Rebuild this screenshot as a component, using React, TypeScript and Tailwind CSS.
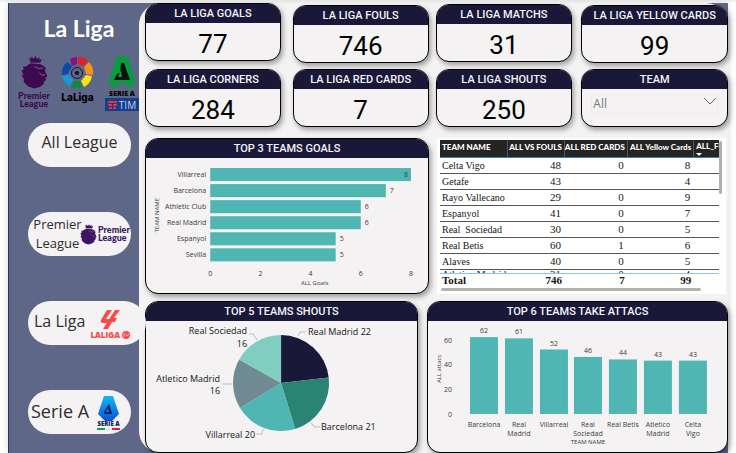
import type { ReactNode } from "react";

const SANS = "font-['Open_Sans',sans-serif]";

function Lion({ className }: { className: string }) {
  return (
    <svg viewBox="0 0 28 34" className={className} aria-hidden="true">
      <path
        fill="currentColor"
        d="M8 1l2 2 1-2.500 2 2.500 2-3 1.500 3 2.500-2v3l2.500-1.500L20 7 10 6.500zM10 7.500l10 1 4 2 2 3-1.500.5 1.500 4 1.500 3-2 1 .5 3-2 1-.5 3-4 3-6 1.500-6-2-4-4-1-3h1l-3-5h2l-2-5h2v-4l2 .5z"
      />
      <path
        d="M14 11l5 2 4-1M19 17l3 3 3-1"
        fill="none"
        className="stroke-white/35"
        strokeWidth="1"
      />
    </svg>
  );
}

function PremierLogo() {
  return (
    <div className="flex w-[32px] flex-col items-center text-[#3d0a4f]">
      <Lion className="h-[33px] w-[27px]" />
      <span className="mt-[3px] text-center font-['Lato',sans-serif] text-[9px] font-black leading-[8px]">
        Premier League
      </span>
    </div>
  );
}

const wedges = [
  { d: "M9 3A15 15 0 0 1 16 1V8L11 10z", fill: "#8a0f80" },
  { d: "M17 1A15 15 0 0 1 27 5L23 10 17 8z", fill: "#e51f25" },
  { d: "M28 6A15 15 0 0 1 32 19L25 18 23 11z", fill: "#f7901e" },
  { d: "M31 20A15 15 0 0 1 23 31L20 25 25 19z", fill: "#fbe016" },
  { d: "M22 31A15 15 0 0 1 10 31L13 25 19 25z", fill: "#128a3b" },
  { d: "M9 30A15 15 0 0 1 1 20L8 19 12 24z", fill: "#139bd8" },
  { d: "M1 19A15 15 0 0 1 6 6L11 10 7 18z", fill: "#0b4ba8" },
];

function LaLigaLogo() {
  return (
    <div className="flex w-[34px] flex-col items-center text-black">
      <svg viewBox="0 0 33 33" className="size-[33px]" aria-hidden="true">
        {wedges.map((w) => (
          <path key={w.fill} d={w.d} fill={w.fill} />
        ))}
        <circle cx="16" cy="17" r="5.5" fill="none" stroke="#111827" strokeWidth="1" />
        <path d="M16 15l2 1.500-1 2h-2l-1-2z" fill="#111827" stroke="#111827" />
      </svg>
      <span className="mt-px font-['Inter',sans-serif] text-[10px] font-extrabold leading-[14px]">LaLiga</span>
    </div>
  );
}

function SerieALogo() {
  return (
    <div className="flex w-[34px] flex-col items-center">
      <svg viewBox="0 0 28 33" className="h-[33px] w-[28px]" aria-hidden="true">
        <path d="M9 0h11l8 27-8 6H8L0 27z" fill="#0b9a42" />
        <path d="M13 7h3l6 17H6l3-6 3-1z" fill="#06150d" />
        <path d="M13 14l-3 7h4z" fill="#0b9a42" />
        <path d="M8 33l3-6h6l3 6z" fill="#5f6788" />
      </svg>
      <span className="font-['Open_Sans',sans-serif] text-[7px] font-extrabold leading-[9px] text-black">SERIE A</span>
      <span className="flex h-[13px] w-full items-center justify-center gap-[2px] bg-[#12408f] text-[#c6cfe4]">
        <svg viewBox="0 0 9 8" className="h-[8px] w-[9px]" aria-hidden="true">
          <path d="M0 0h9v2H0zM0 3h4v2H0zM5 3h4v2H5zM1 6h3v2H1zM5 6h3v2H5z" fill="#e8323c" />
        </svg>
        <span className="font-['Open_Sans',sans-serif] text-[10px] leading-[12px]">TIM</span>
      </span>
    </div>
  );
}

function PremierWide() {
  return (
    <span className="-ml-[2px] flex items-center gap-px text-[#3a1560]">
      <Lion className="h-[21px] w-[17px]" />
      <span className="w-[31px] text-left font-['Lato',sans-serif] text-[9px] font-black leading-[8px]">
        Premier League
      </span>
    </span>
  );
}

function LaLigaRed() {
  return (
    <span className="flex flex-col items-center pt-[4px] text-[#fa4b4b]">
      <svg viewBox="0 0 20 20" className="size-[20px]" aria-hidden="true">
        <path
          d="M7 0h5L6 9h4l-2 4H2Q0 12 1 10zM15 0h5l-6 8h3l-2 4h-3l-4 7H3l5-8z"
          fill="currentColor"
        />
      </svg>
      <span className="flex items-center gap-[2px]">
        <span className="font-['Open_Sans',sans-serif] text-[8px] font-extrabold leading-[10px]">LALIGA</span>
        <svg viewBox="0 0 8 8" className="size-[8px]" aria-hidden="true">
          <circle cx="4" cy="4" r="4" fill="currentColor" />
          <path d="M1 3h2M1 5h2M4 3l1 2 2-2" stroke="#f4f2f3" strokeWidth=".7" fill="none" />
        </svg>
      </span>
    </span>
  );
}

function SerieABlue() {
  return (
    <span className="flex w-[23px] flex-col items-center pt-[2px]">
      <svg viewBox="0 0 21 25" className="h-[25px] w-[21px]" aria-hidden="true">
        <defs>
          <linearGradient id="serie" x1="0" y1="0" x2="0" y2="1">
            <stop offset="0" stopColor="#12b8f5" />
            <stop offset="1" stopColor="#0b50d8" />
          </linearGradient>
        </defs>
        <path d="M6 0h9l6 18-7 7H7l-7-7z" fill="url(#serie)" />
        <path d="M11 8l3 10H6l1-2h4l-1-4-3 5-1-1z" fill="#0a1a5c" />
      </svg>
      <span className="whitespace-nowrap font-['Open_Sans',sans-serif] text-[6px] font-extrabold leading-[7px] text-[#101a5e]">
        SERIE A
      </span>
      <span className="flex h-[2px] w-full">
        <i className="flex-1 bg-[#18a04a]" />
        <i className="flex-1 bg-[#e6e6e6]" />
        <i className="flex-1 bg-[#e02038]" />
      </span>
    </span>
  );
}

const PILL = `flex h-[44px] items-center rounded-full bg-[#f4f2f3] text-[#2e2e2e] ${SANS}`;

function Sidebar() {
  return (
    <aside className="relative z-10 flex w-[131px] shrink-0 flex-col border-l border-[#33364a]">
      <h1 className="mt-[11px] pl-[10px] text-center font-['Lato',sans-serif] text-[23px] font-bold leading-[28px] text-white">
        La Liga
      </h1>
      <div className="ml-[9px] mt-[14px] flex items-start justify-between">
        <PremierLogo />
        <LaLigaLogo />
        <SerieALogo />
      </div>
      <nav className="ml-[19px] mr-[8px] mt-[12px] flex flex-col gap-[45px]">
        <button className={`${PILL} justify-center pb-[6px] text-[16px]`}>All League</button>
        <button className={`${PILL} pl-[5px]`}>
          <span className="w-[49px] text-center text-[13px] leading-[19px]">Premier League</span>
          <PremierWide />
        </button>
        <button className={`${PILL} w-[118px] gap-[5px] pl-[6px]`}>
          <span className="whitespace-nowrap pb-[4px] text-[16px]">La Liga</span>
          <LaLigaRed />
        </button>
        <button className={`${PILL} gap-[8px] pl-[3px]`}>
          <span className="whitespace-nowrap pb-[2px] text-[18px]">Serie A</span>
          <SerieABlue />
        </button>
      </nav>
    </aside>
  );
}

function Card({ title, className, children }: { title: string; className: string; children: ReactNode }) {
  return (
    <section
      className={`flex min-w-0 flex-col overflow-hidden rounded-[13px] border border-black bg-[#f4f2f3] shadow-[2px_3px_5px_rgba(0,0,0,0.35)] ${className}`}
    >
      <h2 className="h-[19px] shrink-0 whitespace-nowrap bg-[#1a1838] text-center font-['Roboto',sans-serif] text-[11px] font-medium leading-[20px] text-[#f4f3f7]">
        {title}
      </h2>
      {children}
    </section>
  );
}

function Stat({ title, value, className }: { title: string; value: number; className: string }) {
  return (
    <Card title={title} className={`h-[58px] ${className}`}>
      <p className="text-center font-['Roboto',sans-serif] text-[26px] leading-[42px] text-black">{value}</p>
    </Card>
  );
}

function TeamFilter() {
  return (
    <Card title="TEAM" className="h-[58px] flex-[147]">
      <label className="relative mx-[9px] mt-px block">
        <select
          aria-label="Team"
          className={`h-[20px] w-full appearance-none border border-[#eeecee] bg-transparent pl-px text-[12px] leading-[18px] text-[#77767a] ${SANS}`}
        >
          <option>All</option>
        </select>
        <svg viewBox="0 0 12 8" className="pointer-events-none absolute right-[2px] top-[7px] h-[8px] w-[12px]" aria-hidden="true">
          <path d="M0 1l6 6 6-6" fill="none" stroke="#666" strokeWidth="1" />
        </svg>
      </label>
    </Card>
  );
}

const goals: [string, number][] = [
  ["Villarreal", 8],
  ["Barcelona", 7],
  ["Athletic Club", 6],
  ["Real Madrid", 6],
  ["Espanyol", 5],
  ["Sevilla", 5],
];

function GoalsChart() {
  return (
    <svg viewBox="0 0 281 135" className={`w-full text-[7px] ${SANS}`} fill="#3c3c3c" role="img" aria-label="Top teams by goals">
      {goals.map(([name, n], i) => (
        <g key={name}>
          <text x="60" y={19 + i * 16} textAnchor="end">{name}</text>
          <rect x="64" y={10 + i * 16} width={n * 25} height="13" fill="#4fb6b4" />
          <text x={n === 8 ? 259 : 70 + n * 25} y={19 + i * 16} textAnchor="middle">{n}</text>
        </g>
      ))}
      {[0, 2, 4, 6, 8].map((n) => (
        <text key={n} x={64 + n * 25} y="118" textAnchor="middle">{n}</text>
      ))}
      <text x="168" y="127" textAnchor="middle" className="text-[6px]">ALL Goals</text>
      <text transform="translate(13 57) rotate(-90)" textAnchor="middle" className="text-[6px]">TEAM NAME</text>
    </svg>
  );
}

const slices = [
  { n: 22, fill: "#1a1838" },
  { n: 21, fill: "#2b8374" },
  { n: 20, fill: "#4fb6b4" },
  { n: 16, fill: "#708b94" },
  { n: 16, fill: "#80cebf" },
];

function ShotsChart() {
  const total = slices.reduce((s, x) => s + x.n, 0);
  const cx = 135;
  const cy = 62;
  const r = 48;
  let acc = 0;
  const at = (v: number) => {
    const a = (v / total) * Math.PI * 2;
    return `${cx + r * Math.sin(a)} ${cy - r * Math.cos(a)}`;
  };
  return (
    <svg viewBox="0 0 271 130" className={`w-full text-[9px] ${SANS}`} fill="#151515" role="img" aria-label="Shots by team">
      {slices.map(({ n, fill }) => {
        const from = at(acc);
        acc += n;
        return <path key={fill} d={`M${cx} ${cy}L${from}A${r} ${r} 0 0 1 ${at(acc)}z`} fill={fill} />;
      })}
      <path d="M152 15l2-4h6M165 102l4 4h5M117 108l-1 5h-6M86 63H76M111 19l-4-6h-4" fill="none" stroke="#c0c0c0" />
      <text x="162" y="14">Real Madrid 22</text>
      <text x="175" y="109">Barcelona 21</text>
      <text x="109" y="117" textAnchor="end">Villarreal 20</text>
      <text x="101" y="13" textAnchor="end">Real Sociedad</text>
      <text x="101" y="26" textAnchor="end">16</text>
      <text x="74" y="61" textAnchor="end">Atletico Madrid</text>
      <text x="74" y="73" textAnchor="end">16</text>
    </svg>
  );
}

const attacks: [string[], number][] = [
  [["Barcelona"], 62],
  [["Real", "Madrid"], 61],
  [["Villarreal"], 52],
  [["Real", "Sociedad"], 46],
  [["Real Betis"], 44],
  [["Atletico", "Madrid"], 43],
  [["Celta", "Vigo"], 43],
];

function AttacksChart() {
  const unit = 1.24;
  return (
    <svg viewBox="0 0 299 130" className={`w-full text-[7px] ${SANS}`} fill="#3c3c3c" role="img" aria-label="Attacks by team">
      {[0, 20, 40, 60].map((n) => (
        <text key={n} x="24" y={96 - n * unit} textAnchor="end">{n}</text>
      ))}
      {attacks.map(([lines, n], i) => {
        const x = 56 + Math.round(i * 34.8);
        return (
          <g key={i} textAnchor="middle">
            <rect x={x - 14} y={93 - n * unit} width="28" height={n * unit} fill="#4fb6b4" />
            <text x={x} y={89 - n * unit}>{n}</text>
            {lines.map((line, j) => (
              <text key={line} x={x} y={106 + j * 9}>{line}</text>
            ))}
          </g>
        );
      })}
      <text x="160" y="123" textAnchor="middle" className="text-[6px]">TEAM NAME</text>
      <text transform="translate(13 48) rotate(-90)" textAnchor="middle" className="text-[6px]">ALL attacs</text>
    </svg>
  );
}

const rows: [string, string, string, string][] = [
  ["Celta Vigo", "48", "0", "8"],
  ["Getafe", "43", "", "4"],
  ["Rayo Vallecano", "29", "0", "9"],
  ["Espanyol", "41", "0", "7"],
  ["Real  Sociedad", "30", "0", "5"],
  ["Real Betis", "60", "1", "6"],
  ["Alaves", "40", "0", "5"],
  ["Atletico Madrid", "31", "0", "4"],
];

const ROW = "grid grid-cols-[68fr_57fr_63fr_67fr_26fr]";
const HEAD = "whitespace-nowrap border-l border-[#555] pr-[2px]";

function TeamTable() {
  return (
    <section className="relative flex-1 bg-white pl-[3px] pr-[7px] pt-[2px]">
      <table className="block font-['Liberation_Serif',serif] text-[10px] text-[#151515]">
        <thead className="block">
          <tr
            className={`${ROW} h-[18px] overflow-hidden border-b border-[#2f7fc4] bg-[#252423] text-right font-['Lato',sans-serif] text-[8px] leading-[14px] text-white`}
          >
            <th className="whitespace-nowrap pl-[2px] text-left font-black">TEAM NAME</th>
            <th className={`${HEAD} font-black`}>ALL VS FOULS</th>
            <th className={`${HEAD} font-black`}>ALL RED CARDS</th>
            <th className={`${HEAD} font-black`}>ALL Yellow Cards</th>
            <th className="overflow-hidden whitespace-nowrap border-l border-[#555] pl-[2px] text-left font-black leading-[13px]">
              ALL_FOULS
              <svg viewBox="0 0 6 3" className="h-[3px] w-[6px]" aria-hidden="true">
                <path d="M0 0h6L3 3z" fill="#fff" />
              </svg>
            </th>
          </tr>
        </thead>
        <tbody className="block h-[115px] overflow-hidden leading-[15px]">
          {rows.map(([name, ...cells]) => (
            <tr key={name} className={`${ROW} h-[16px] border-b border-[#555] last:leading-[9px]`}>
              <td className="whitespace-pre pl-[2px]">{name}</td>
              {cells.map((c, i) => (
                <td key={i} className="pr-[3px] text-right text-[11px]">{c}</td>
              ))}
              <td />
            </tr>
          ))}
        </tbody>
        <tfoot className="block">
          <tr className={`${ROW} h-[14px] border-t border-[#8cc4f0] text-[11px] font-bold leading-[13px]`}>
            <td className="pl-[2px]">Total</td>
            <td className="pr-[2px] text-right">746</td>
            <td className="pr-[2px] text-right">7</td>
            <td className="pr-[2px] text-right">99</td>
            <td />
          </tr>
        </tfoot>
      </table>
      <div className="absolute right-[4px] top-[3px] h-[53px] w-[3px] rounded-full bg-[#b3b1b1]" />
      <div className="ml-[1px] mr-[18px] mt-[1px] h-[3px] rounded-full bg-[#b3b1b1]" />
    </section>
  );
}

export default function App() {
  return (
    <div className="bg-linear-to-b from-[#ebebeb] to-white to-[3px] px-[8px] pt-[3px]">
      <div className="flex bg-[#5f6788] shadow-[0_0_7px_rgba(0,0,0,0.14)]">
        <Sidebar />
        <main className="flex min-w-0 flex-1 flex-col gap-[7px] rounded-[22px] bg-[#f4f2f3] pl-[6px]">
          <div className="flex gap-[7px]">
            <div className="flex flex-[284] items-start gap-[12px]">
              <Stat title="LA LIGA GOALS" value={77} className="flex-1" />
              <Stat title="LA LIGA FOULS" value={746} className="mt-[2px] flex-1" />
            </div>
            <div className="flex flex-[293] items-start gap-[9px]">
              <Stat title="LA LIGA MATCHS" value={31} className="mt-[1px] flex-[137]" />
              <Stat title="LA LIGA YELLOW CARDS" value={99} className="mt-[2px] flex-[147]" />
            </div>
          </div>
          <div className="-mt-[1px] flex gap-[7px]">
            <div className="flex flex-[284] gap-[12px]">
              <Stat title="LA LIGA CORNERS" value={284} className="flex-1" />
              <Stat title="LA LIGA RED CARDS" value={7} className="flex-1" />
            </div>
            <div className="flex flex-[293] gap-[9px]">
              <Stat title="LA LIGA SHOUTS" value={250} className="flex-[137]" />
              <TeamFilter />
            </div>
          </div>
          <div className="mt-[4px] flex gap-[8px] pr-[2px]">
            <Card title="TOP 3 TEAMS GOALS" className="flex-[283]">
              <GoalsChart />
            </Card>
            <div className="flex flex-[290]">
              <TeamTable />
            </div>
          </div>
          <div className="flex gap-[9px]">
            <Card title="TOP 5 TEAMS SHOUTS" className="flex-[273]">
              <ShotsChart />
            </Card>
            <Card title="TOP 6 TEAMS TAKE ATTACS" className="flex-[301]">
              <AttacksChart />
            </Card>
          </div>
        </main>
      </div>
    </div>
  );
}
